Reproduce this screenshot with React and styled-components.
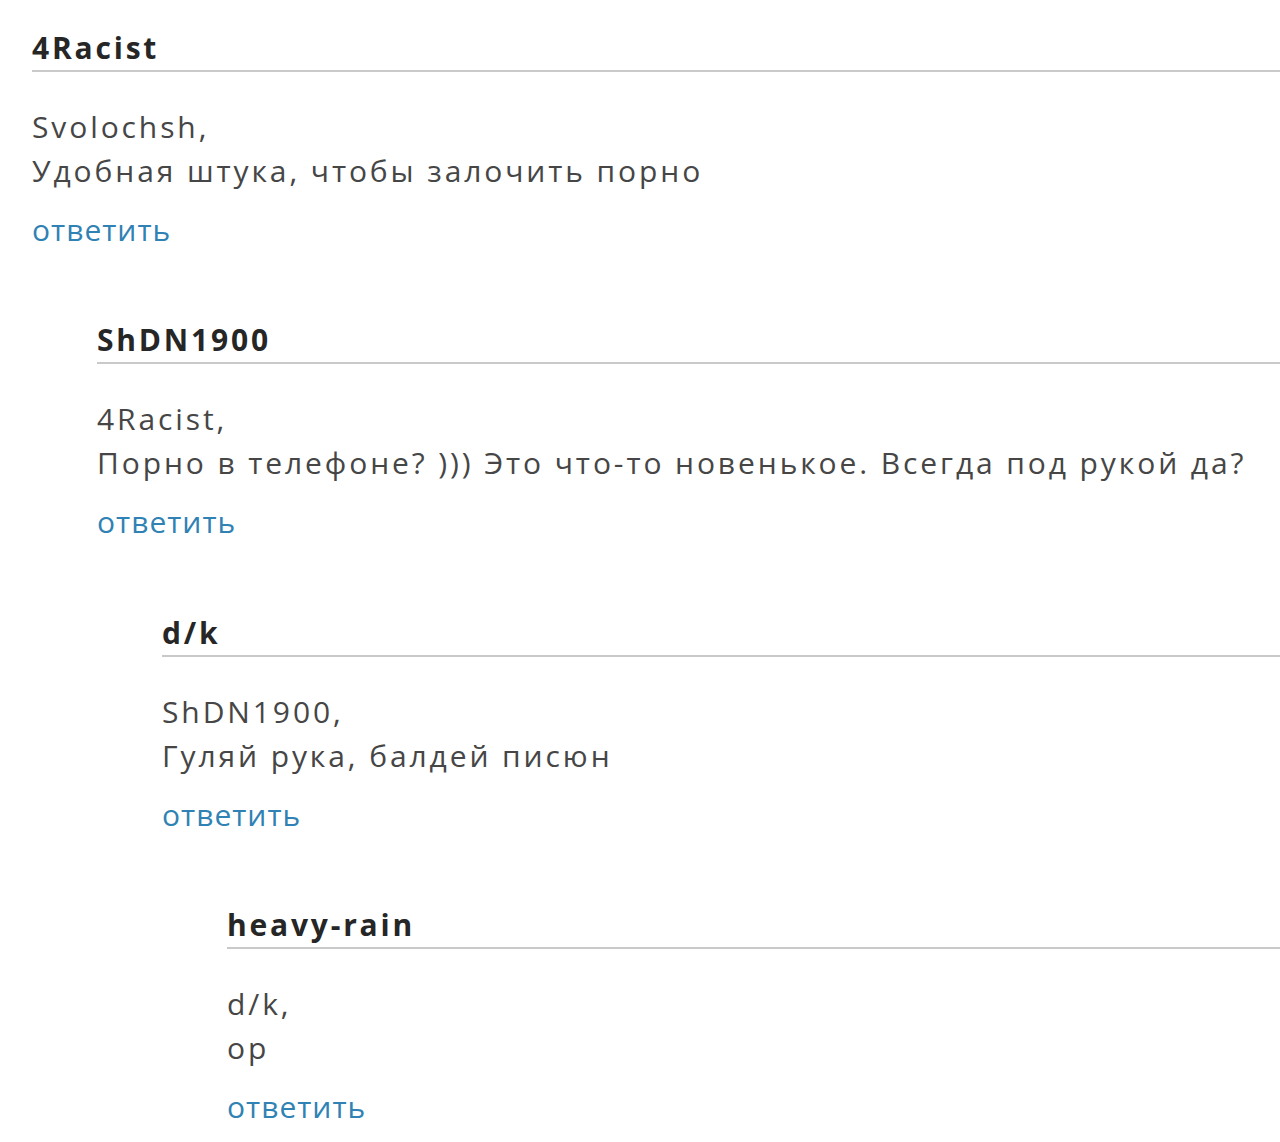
import React from "react";
import styled, { createGlobalStyle } from "styled-components";

const Global = createGlobalStyle`
  html, body { margin: 0; padding: 0; background: #fff; }
  body { font-family: "Open Sans", "Noto Sans", sans-serif; overflow: hidden; }
`;

const Page = styled.div`
  padding: 26px 0 0 32px;
  width: 1248px;
  height: 1116px;
  overflow: hidden;
`;

const Comment = styled.div`
  display: flex;
  flex-direction: column;
  margin-left: ${(p) => (p.$nested ? "65px" : "0")};
  margin-top: ${(p) => (p.$nested ? "66.3px" : "0")};
`;

const Name = styled.div`
  font-size: 30px;
  line-height: 44px;
  font-weight: 700;
  letter-spacing: 2.8px;
  color: #262626;
  border-bottom: 2px solid #c9c9c9;
  white-space: nowrap;
`;

const Body = styled.div`
  margin-top: 33px;
  font-size: 30px;
  line-height: 44px;
  letter-spacing: 2.9px;
  color: #464646;
  white-space: nowrap;
`;

const Reply = styled.a`
  margin-top: 15px;
  font-size: 30px;
  line-height: 44px;
  letter-spacing: 1px;
  color: #2f82b3;
  text-decoration: none;
  align-self: flex-start;
  cursor: pointer;
`;

const data = {
  name: "4Racist",
  to: "Svolochsh,",
  text: "Удобная штука, чтобы залочить порно",
  child: {
    name: "ShDN1900",
    to: "4Racist,",
    text: "Порно в телефоне? ))) Это что-то новенькое. Всегда под рукой да?",
    child: {
      name: "d/k",
      to: "ShDN1900,",
      text: "Гуляй рука, балдей писюн",
      child: {
        name: "heavy-rain",
        to: "d/k,",
        text: "ор",
      },
    },
  },
};

function Thread({ c, nested }) {
  return (
    <Comment $nested={nested}>
      <Name>{c.name}</Name>
      <Body>
        {c.to}
        <br />
        {c.text}
      </Body>
      <Reply>ответить</Reply>
      {c.child && <Thread c={c.child} nested />}
    </Comment>
  );
}

export default function App() {
  return (
    <>
      <Global />
      <Page>
        <Thread c={data} />
      </Page>
    </>
  );
}
